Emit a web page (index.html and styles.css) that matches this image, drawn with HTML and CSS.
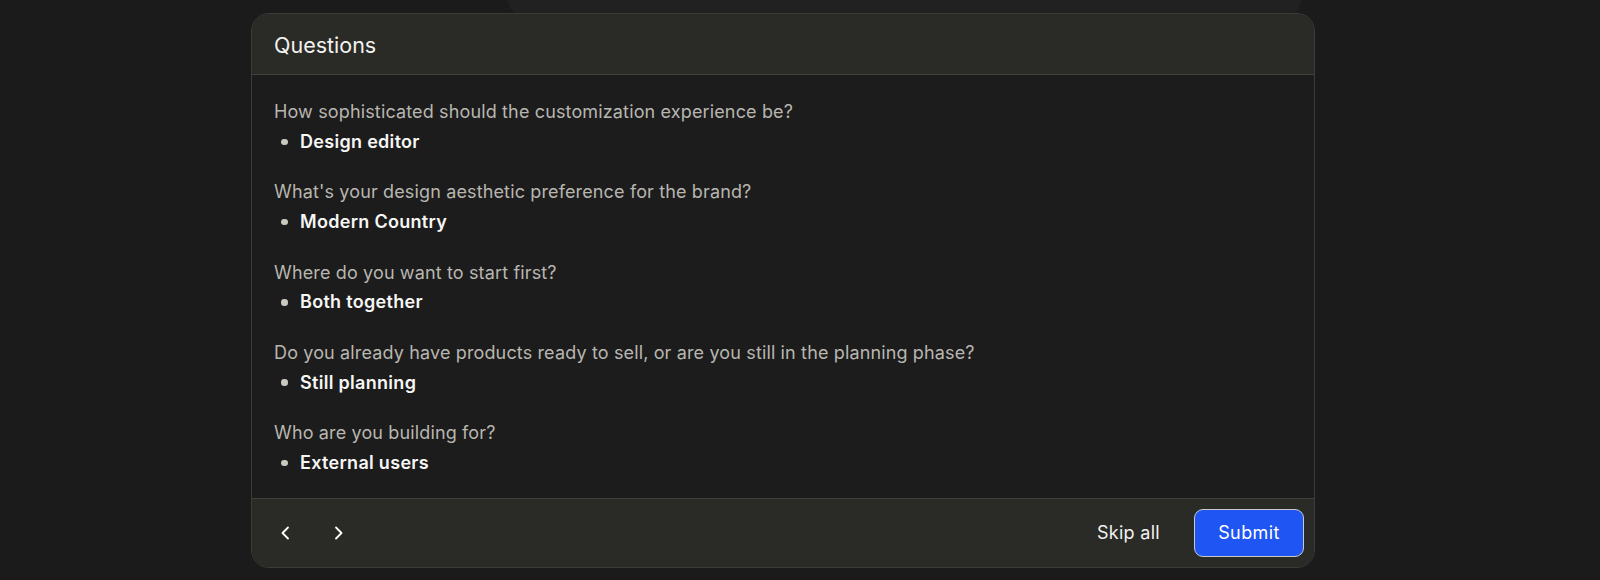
FILE: index.html
```html
<!DOCTYPE html>
<html lang="en">
<head>
<meta charset="utf-8">
<title>Questions</title>
<link rel="stylesheet" href="styles.css">
</head>
<body>
<div class="backdrop"></div>
<section class="card">
  <header class="card-header">Questions</header>
  <div class="card-body">
    <div class="item">
      <div class="question">How sophisticated should the customization experience be?</div>
      <div class="answer"><span class="dot"></span>Design editor</div>
    </div>
    <div class="item">
      <div class="question">What's your design aesthetic preference for the brand?</div>
      <div class="answer"><span class="dot"></span>Modern Country</div>
    </div>
    <div class="item">
      <div class="question">Where do you want to start first?</div>
      <div class="answer"><span class="dot"></span>Both together</div>
    </div>
    <div class="item">
      <div class="question">Do you already have products ready to sell, or are you still in the planning phase?</div>
      <div class="answer"><span class="dot"></span>Still planning</div>
    </div>
    <div class="item">
      <div class="question">Who are you building for?</div>
      <div class="answer"><span class="dot"></span>External users</div>
    </div>
  </div>
  <footer class="card-footer">
    <div class="nav">
      <button class="icon-btn" aria-label="Previous">
        <svg width="16" height="16" viewBox="0 0 16 16" fill="none"><path d="M10 2.5 L4.5 8 L10 13.5" stroke="#fff" stroke-width="1.8" stroke-linecap="round" stroke-linejoin="round"/></svg>
      </button>
      <button class="icon-btn" aria-label="Next">
        <svg width="16" height="16" viewBox="0 0 16 16" fill="none"><path d="M6 2.5 L11.5 8 L6 13.5" stroke="#fff" stroke-width="1.8" stroke-linecap="round" stroke-linejoin="round"/></svg>
      </button>
    </div>
    <div class="actions">
      <button class="skip-btn">Skip all</button>
      <button class="submit-btn">Submit</button>
    </div>
  </footer>
</section>
</body>
</html>
```
FILE: styles.css
```css
* { box-sizing: border-box; }

html, body {
  margin: 0;
  padding: 0;
  background: #1b1b1b;
  height: 580px;
  overflow: hidden;
}

body {
  position: relative;
  font-family: Inter, "Noto Sans", "Liberation Sans", sans-serif;
  padding-top: 13px;
  padding-left: 251px;
}

.backdrop {
  position: absolute;
  left: 507px;
  top: -40px;
  width: 795px;
  height: 60px;
  border-radius: 24px;
  background: #212121;
}

.card {
  position: relative;
  width: 1064px;
  border: 1px solid #3b3b38;
  border-radius: 18px;
  background: #1c1c1c;
  overflow: hidden;
}

.card-header {
  height: 61px;
  padding: 2px 22px 0;
  display: flex;
  align-items: center;
  background: #2a2a26;
  border-bottom: 1px solid #40403c;
  color: #f2f2f0;
  font-size: 21.5px;
  font-weight: 400;
}

.card-body {
  padding: 25px 22px 23px;
  display: flex;
  flex-direction: column;
  gap: 26.5px;
}

.question {
  font-size: 18px;
  line-height: 24px;
  letter-spacing: 0.14px;
  color: #b8b6b0;
}

.answer {
  margin-top: 5.8px;
  display: flex;
  align-items: center;
  font-size: 18px;
  line-height: 24px;
  font-weight: 600;
  letter-spacing: 0.3px;
  color: #f6f6f4;
  padding-left: 7px;
}

.dot {
  width: 6.5px;
  height: 6.5px;
  border-radius: 50%;
  background: #cbc8c1;
  margin-right: 12.5px;
}

.card-footer {
  height: 69px;
  display: flex;
  align-items: center;
  justify-content: space-between;
  background: #2a2a26;
  border-top: 1px solid #40403c;
  padding: 0 10px 0 16px;
}

.nav {
  display: flex;
  gap: 16px;
}

.icon-btn {
  width: 36px;
  height: 36px;
  display: flex;
  align-items: center;
  justify-content: center;
  background: transparent;
  border: 0;
  padding: 0;
}

.actions {
  display: flex;
  align-items: center;
  gap: 18px;
}

.skip-btn {
  background: transparent;
  border: 0;
  color: #f2f2f0;
  font-family: inherit;
  font-size: 18px;
  letter-spacing: 0.3px;
  padding: 0 16px;
  height: 48px;
}

.submit-btn {
  width: 110px;
  height: 48px;
  border-radius: 9px;
  border: 1px solid #c9c9c9;
  background: #1f55f2;
  color: #ffffff;
  font-family: inherit;
  font-size: 18px;
  letter-spacing: 0.4px;
}
```
